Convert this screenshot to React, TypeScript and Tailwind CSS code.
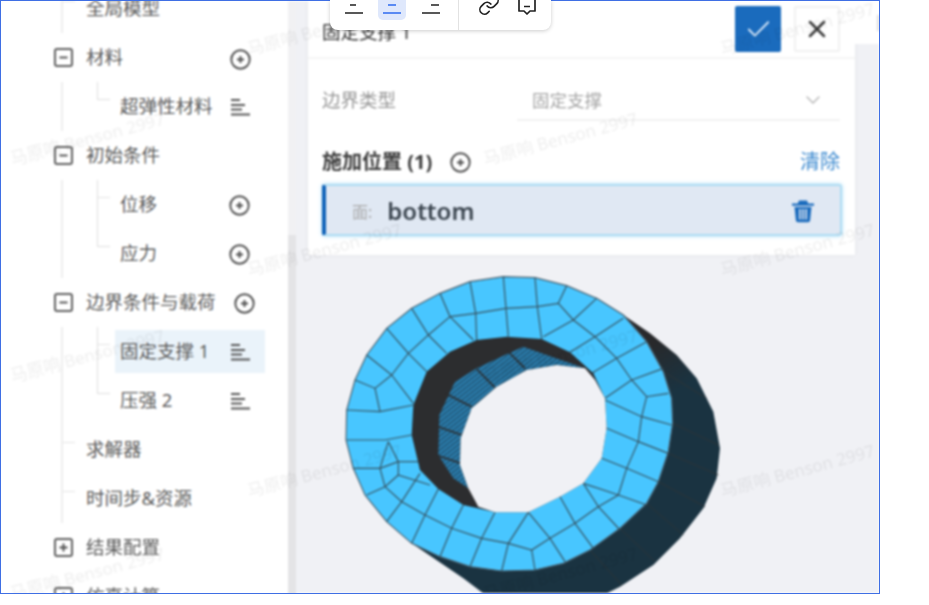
import { Check, ChevronDown, Link, X } from 'lucide-react';

const ringOuter =
  '520,35 615,38 710,62 800,100 880,150 950,230 1000,320 1025,400 1028,475 1015,560 985,650 950,715 870,790 780,855 700,895 615,915 515,918 420,905 330,875 245,835 170,770 105,690 70,610 48,525 50,435 75,345 110,270 170,190 245,130 330,85 420,50';
const ringInner =
  '530,215 635,222 720,262 790,325 825,400 830,490 815,580 760,655 690,695 595,742 495,742 400,720 325,672 270,615 245,510 250,420 290,320 360,260 440,225';
const hole =
  '765,310 795,345 825,400 830,490 815,580 760,655 690,695 595,742 495,742 445,725 415,670 390,600 392,520 425,430 500,365 590,315 680,300';
const backShape =
  '800,100 880,150 960,205 1040,270 1100,340 1150,440 1170,550 1160,640 1120,730 1050,820 970,900 870,965 800,1000 480,1000 400,940 245,835 700,500';
const wallBand =
  '325,570 328,450 375,350 440,310 520,272 580,245 650,270 765,310 680,300 590,315 500,365 425,430 392,520 390,600 415,670 370,640';

const meshLines = [
  '420,50 437,145 440,225',
  '520,35 528,130 535,215',
  '615,38 622,125 635,222',
  '710,62 685,115',
  '800,100 730,165 640,215',
  '880,160 795,215 720,262',
  '950,230 860,280 785,325',
  '1000,310 905,345 825,400',
  '1015,385 950,395 935,455 825,405',
  '935,455 1025,480',
  '830,490 925,530 1015,565',
  '815,580 890,610 985,650',
  '760,655 865,690 950,720',
  '690,695 735,775 790,850',
  '760,655 805,725 870,795',
  '595,742 660,820 705,890',
  '595,742 535,835 515,918',
  '605,855 615,915',
  '495,742 455,820 420,905',
  '400,720 365,790 330,875',
  '325,672 285,750 245,835',
  '270,625 215,710 170,770',
  '205,630 165,665 110,690',
  '205,590 150,610 70,610',
  '150,610 165,665',
  '175,530 150,610',
  '50,525 165,525 245,510',
  '50,435 150,440 250,420',
  '150,440 135,370 75,345',
  '135,370 185,330 110,270',
  '185,330 250,415',
  '185,330 235,265 170,190',
  '235,265 295,210 245,130',
  '235,265 290,320',
  '295,210 360,155 330,85',
  '295,210 350,265',
  '360,155 437,145 528,130 622,125 685,115 730,165 795,215 860,280 905,345 950,395',
  '360,155 430,225',
  '935,455 925,530 890,610 865,690 805,725 735,775 660,820 605,855 535,835 455,820 365,790 285,750 215,710 165,665',
  '175,530 205,590 205,630 300,660',
  '205,590 265,590',
];

// dark seams across the inner wall, and the faint ones on the outer skin
const wallSeams = ['530,255 585,310', '440,312 495,368', '345,385 425,425', '325,485 395,510', '318,570 392,595'];
const skinSeams = [
  '1028,475 1165,540',
  '1015,565 1165,630',
  '985,650 1125,725',
  '950,715 1060,810',
  '870,790 975,890',
  '780,855 875,960',
  '1000,320 1130,400',
];

const watermarks = [
  'left-[7px] top-[125px]',
  'left-[7px] top-[342px]',
  'left-[7px] top-[560px]',
  'left-[244px] top-[15px]',
  'left-[244px] top-[236px]',
  'left-[244px] top-[457px]',
  'left-[480px] top-[125px]',
  'left-[480px] top-[342px]',
  'left-[480px] top-[560px]',
  'left-[717px] top-[15px]',
  'left-[717px] top-[236px]',
  'left-[717px] top-[457px]',
];

function PlusCircle() {
  return (
    <svg width="21" height="21" viewBox="0 0 21 21" fill="none" className="shrink-0">
      <circle cx="10.5" cy="10.5" r="9.2" stroke="#4f4f4f" strokeWidth="1.9" />
      <path d="M10.5 7v7M7 10.5h7" stroke="#4f4f4f" strokeWidth="1.9" />
    </svg>
  );
}

function ListIcon() {
  return (
    <svg width="19" height="19" viewBox="0 0 19 19" fill="none" className="shrink-0">
      <path d="M0 2h9M0 7h14M0 11.5h11M0 16.5h19" stroke="#555" strokeWidth="1.9" />
    </svg>
  );
}

function BoxIcon({ open }: { open?: boolean }) {
  return (
    <span className="flex h-[19px] w-[19px] shrink-0 items-center justify-center rounded-[3px] border-2 border-[#5f5f5f]">
      <svg width="11" height="11" viewBox="0 0 11 11" fill="none">
        <path d={open ? 'M1.5 5.5h8' : 'M1.5 5.5h8M5.5 1.5v8'} stroke="#4f4f4f" strokeWidth="1.9" />
      </svg>
    </span>
  );
}

function GroupRow({ label, open, icon, wide }: { label: string; open?: boolean; icon?: boolean; wide?: boolean }) {
  return (
    <div className="flex h-[49px] items-center pl-[53px]">
      <BoxIcon open={open} />
      <span className="-mt-[2px] ml-[13px] text-[18.5px] text-[#5c5c5c]">{label}</span>
      {icon && (
        <span className={wide ? 'ml-auto mr-[33px] mt-[2px]' : 'ml-auto mr-[37px] mt-[3px]'}>
          <PlusCircle />
        </span>
      )}
    </div>
  );
}

function PlainLeaf({ label }: { label: string }) {
  return (
    <div className="flex h-[49px] items-center">
      <span className="h-[18px] w-[12px] self-start border-b border-[#e4e4e4]" />
      <span className="-mt-[2px] ml-[11px] text-[18.5px] text-[#5c5c5c]">{label}</span>
    </div>
  );
}

function Leaf({ label, icon, last, active }: { label: string; icon: 'plus' | 'list'; last?: boolean; active?: boolean }) {
  return (
    <div className="flex h-[49px] items-center pl-[34px]">
      {last ? (
        <span className="h-[18px] w-[13px] shrink-0 self-start border-b border-l border-[#dedede]" />
      ) : (
        <span className="h-full w-[13px] shrink-0 border-l border-[#dedede]">
          <span className="block h-[18px] border-b border-[#e4e4e4]" />
        </span>
      )}
      <div className={`ml-[5px] flex h-[43px] w-[150px] items-center pl-[5px] ${active ? 'bg-[#eaf3fa]' : ''}`}>
        <span className="-mt-[2px] text-[18.5px] text-[#5c5c5c]">{label}</span>
        <span className="ml-auto mr-[15px] mt-[2px]">{icon === 'plus' ? <PlusCircle /> : <ListIcon />}</span>
      </div>
    </div>
  );
}

function Sidebar() {
  return (
    <div className="-mt-[17px] w-[287px] shrink-0 bg-white">
      <div className="ml-[60px] border-l-2 border-[#eeeeee]">
        <PlainLeaf label="全局模型" />
      </div>
      <GroupRow label="材料" open icon />
      <div className="ml-[60px] border-l-2 border-[#eeeeee]">
        <Leaf label="超弹性材料" icon="list" last />
      </div>
      <GroupRow label="初始条件" open />
      <div className="ml-[60px] border-l-2 border-[#eeeeee]">
        <Leaf label="位移" icon="plus" />
        <Leaf label="应力" icon="plus" last />
      </div>
      <GroupRow label="边界条件与载荷" open icon wide />
      <div className="ml-[60px] border-l-2 border-[#eeeeee]">
        <Leaf label="固定支撑 1" icon="list" active />
        <Leaf label="压强 2" icon="list" last />
        <PlainLeaf label="求解器" />
        <PlainLeaf label="时间步&资源" />
      </div>
      <GroupRow label="结果配置" />
      <GroupRow label="仿真计算" />
    </div>
  );
}

function Panel() {
  return (
    <div className="flex h-[254px] w-[547px] shrink-0 flex-col bg-white shadow-[0_0_4px_rgba(0,0,0,0.06)]">
      <div className="flex h-[58px] shrink-0 items-center border-b-2 border-[#f5f5f5] pl-[14px] pr-[15px]">
        <span className="mt-[6px] text-[18.5px] text-[#333]">固定支撑 1</span>
        <button className="ml-auto flex h-[46px] w-[46px] items-center justify-center rounded-[2px] bg-[#1a6bbd]">
          <Check size={29} strokeWidth={1.5} className="text-[#dbeafa]" />
        </button>
        <button className="ml-[13px] flex h-[46px] w-[46px] items-center justify-center rounded-[2px] border-2 border-[#f1f1f1] bg-white">
          <X size={28} strokeWidth={2.2} className="text-[#3c3c3c]" />
        </button>
      </div>
      <div className="flex flex-col pl-[14px] pr-[15px]">
        <div className="flex items-end pt-[22px]">
          <span className="-mt-[1px] flex h-[40px] w-[195px] items-center pb-[2px] text-[18.5px] text-[#969696]">边界类型</span>
          <div className="flex h-[40px] flex-1 items-center border-b-2 border-[#f2f2f2] pl-[15px] pr-[15px]">
            <span className="text-[17.5px] text-[#a6a6a6]">固定支撑</span>
            <ChevronDown size={24} strokeWidth={1.4} className="ml-auto text-[#b5b5b5]" />
          </div>
        </div>
        <div className="mt-[25px] flex h-[32px] items-center">
          <span className="text-[20px] font-bold text-[#3c3c3c]">施加位置 (1)</span>
          <span className="ml-[18px]">
            <PlusCircle />
          </span>
          <span className="ml-auto text-[20px] text-[#3f8bd0]">清除</span>
        </div>
        <div className="-mr-[2px] mt-[6px] flex h-[52px] items-center rounded-[3px] border-2 border-l-4 border-[#aedcf3] border-l-[#0f62b8] bg-[#e0e8f3] pl-[26px] pr-[24px] shadow-[0_0_4px_#a8dcf5]">
          <span className="mt-[4px] text-[16px] text-[#a9a9a9]">面:</span>
          <span className="ml-[15px] mt-[1px] text-[24px] font-semibold text-[#3c4650]">bottom</span>
          <svg width="26" height="26" viewBox="0 0 26 26" className="ml-auto">
            <path d="M2 6.5h22v2.3H2zM9 3.5h8l1.2 3H7.8z" fill="#1a6bbd" />
            <path
              d="M4.5 10h17l-1.4 13.5a2 2 0 0 1-2 1.8H7.9a2 2 0 0 1-2-1.8zM9 12v10.5h1.6V12zm3.2 0v10.5h1.6V12zm3.2 0v10.5H17V12z"
              fill="#1a6bbd"
              fillRule="evenodd"
            />
          </svg>
        </div>
      </div>
    </div>
  );
}

function Mesh() {
  return (
    <svg viewBox="0 0 1200 1020" className="ml-[34px] mt-[10px] h-[340px] w-[400px] shrink-0">
      <defs>
        <linearGradient id="skin" x1="0.25" y1="0.1" x2="0.6" y2="0.7">
          <stop offset="0.45" stopColor="#28292b" />
          <stop offset="0.7" stopColor="#1a3341" />
        </linearGradient>
        <pattern id="hatch" width="11" height="11" patternUnits="userSpaceOnUse" patternTransform="rotate(-38)">
          <rect width="11" height="11" fill="#2b7fb0" />
          <rect width="11" height="4" fill="#1f4f6c" />
        </pattern>
      </defs>
      <polygon points={backShape} fill="url(#skin)" />
      {skinSeams.map((seam) => (
        <polyline key={seam} points={seam} fill="none" stroke="#2d3438" strokeWidth="3" />
      ))}
      <polygon points={ringOuter} fill="#48c6ff" stroke="#4a5f6c" strokeWidth="3.5" />
      <polygon points={ringInner} fill="#2c2d2f" />
      <polygon points={wallBand} fill="url(#hatch)" />
      {wallSeams.map((seam) => (
        <polyline key={seam} points={seam} fill="none" stroke="#2c2d2f" strokeWidth="5" />
      ))}
      <polygon points={hole} fill="#f0f1f5" />
      {meshLines.map((line) => (
        <polyline key={line} points={line} fill="none" stroke="#37525f" strokeWidth="3.5" />
      ))}
    </svg>
  );
}

function Toolbar() {
  return (
    <div className="absolute left-[330px] top-0 flex h-[30px] w-[221px] overflow-hidden rounded-b-lg bg-white shadow-[0_1px_4px_rgba(0,0,0,0.2)]">
      <div className="flex w-[129px] items-start border-r border-[#e2e2e2] pl-[15px] blur-[0.6px]">
        <svg width="18" height="16" viewBox="0 0 18 16" fill="none">
          <path d="M5 5h6M0 13h18" stroke="#222" strokeWidth="1.7" />
        </svg>
        <span className="ml-[15px] flex h-[20px] w-[28px] items-start justify-center rounded-b-[5px] bg-[#dfe8fc]">
          <svg width="18" height="16" viewBox="0 0 18 16" fill="none">
            <path d="M5 5h8M0 13h18" stroke="#2f6bf0" strokeWidth="1.7" />
          </svg>
        </span>
        <svg width="18" height="16" viewBox="0 0 18 16" fill="none" className="ml-[16px]">
          <path d="M9 5h8M0 13h18" stroke="#222" strokeWidth="1.7" />
        </svg>
      </div>
      <div className="flex items-start pl-[19px] blur-[0.6px]">
        <Link size={22} strokeWidth={1.8} className="-mt-[6px] text-[#222]" />
        <svg width="18" height="16" viewBox="0 0 18 16" fill="none" className="ml-[18px]">
          <path d="M1 0v11h5l3 3 3-3h5V0M6 6.5h6" stroke="#222" strokeWidth="1.7" strokeLinejoin="round" />
        </svg>
      </div>
    </div>
  );
}

export default function App() {
  return (
    <div className="relative h-[605px] w-[929px] bg-white font-['Noto_Sans','Noto_Sans_CJK_SC',sans-serif]">
      <div className="relative h-[594px] w-[880px] overflow-hidden border border-[#3f6fe4]">
        <div className="flex h-full blur-[1px]">
          <Sidebar />
          <div className="w-[8px] shrink-0 bg-[#f1f1f3]">
            <div className="mt-[234px] h-[360px] bg-[#e4e4e6]" />
          </div>
          <div className="flex flex-1 flex-col overflow-hidden bg-[#f0f1f5]">
            <div className="flex pl-[12px]">
              <Panel />
              <div className="flex h-[43px] flex-1 items-center justify-end bg-white">
                <span className="h-[16px] w-[2px] bg-[#dddddd]" />
              </div>
            </div>
            <Mesh />
          </div>
          {watermarks.map((position) => (
            <span
              key={position}
              className={`pointer-events-none absolute -rotate-15 whitespace-nowrap text-[17px] text-black/[0.07] ${position}`}
            >
              马原响 Benson 2997
            </span>
          ))}
        </div>
      </div>
      <Toolbar />
    </div>
  );
}
